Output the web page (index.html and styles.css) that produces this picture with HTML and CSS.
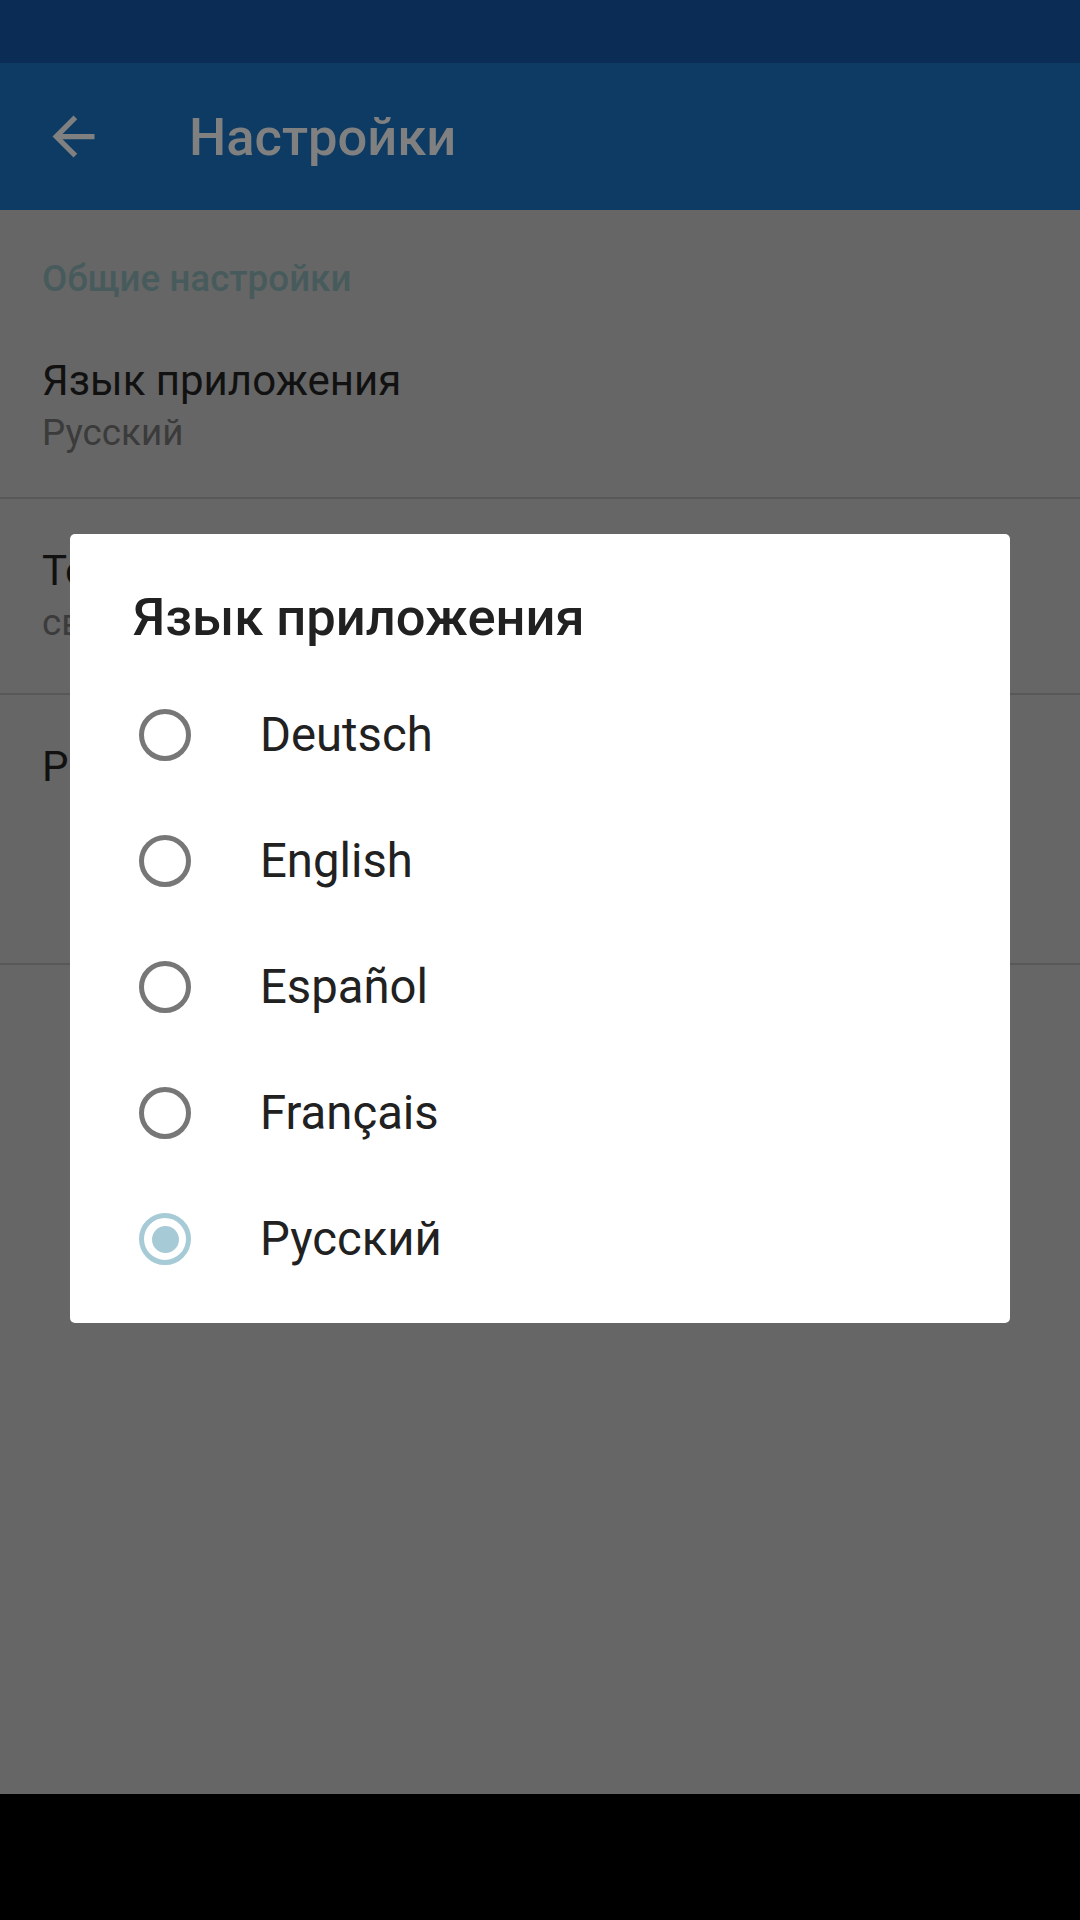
FILE: index.html
```html
<!DOCTYPE html>
<html lang="ru">
<head>
  <meta charset="UTF-8" />
  <title>Настройки</title>
  <link rel="stylesheet" href="styles.css">
</head>
<body>

<div class="status-bar"></div>

<header class="app-bar">
  <svg class="back" viewBox="0 0 24 24" width="63" height="63">
    <path d="M20 11H7.83l5.59-5.59L12 4l-8 8 8 8 1.41-1.41L7.83 13H20v-2z" fill="#808080"/>
  </svg>
  <h1>Настройки</h1>
</header>

<main class="content">
  <div class="category">Общие настройки</div>

  <div class="pref pref-1">
    <div class="pref-title">Язык приложения</div>
    <div class="pref-summary">Русский</div>
  </div>

  <div class="pref pref-2">
    <div class="pref-title">Тема</div>
    <div class="pref-summary">светлая</div>
  </div>

  <div class="pref pref-3">
    <div class="pref-title">Размер шрифта</div>
  </div>
</main>

<div class="nav-bar"></div>

<!-- диалог выбора языка поверх экрана -->
<div class="scrim">
  <div class="dialog">
    <div class="dialog-title">Язык приложения</div>
    <div class="options">
      <div class="option"><span class="radio"></span><span class="label">Deutsch</span></div>
      <div class="option"><span class="radio"></span><span class="label">English</span></div>
      <div class="option"><span class="radio"></span><span class="label">Español</span></div>
      <div class="option"><span class="radio"></span><span class="label">Français</span></div>
      <div class="option checked"><span class="radio"></span><span class="label">Русский</span></div>
    </div>
  </div>
</div>

</body>
</html>
```

FILE: styles.css
```css
body {
  margin: 0;
  width: 1080px;
  height: 1920px;
  display: flex;
  flex-direction: column;
  font-family: Roboto, "Noto Sans", sans-serif;
  background: #666666;
  position: relative;
  overflow: hidden;
}
.status-bar {
  height: 63px;
  background: #0b2c54;
}
.app-bar {
  height: 147px;
  background: #0d3b63;
  display: flex;
  align-items: center;
  padding-left: 42px;
}
.app-bar .back {
  flex: none;
}
.app-bar h1 {
  margin: 0 0 0 84px;
  font-size: 52.5px;
  font-weight: 500;
  color: #808080;
}
.content {
  flex: 1;
  background: #666666;
}
.category {
  height: 99px;
  box-sizing: border-box;
  padding: 47px 42px 0;
  font-size: 36.75px;
  line-height: 44px;
  font-weight: 500;
  color: #475b5c;
}
.pref {
  box-sizing: border-box;
  padding: 47px 42px 0;
  border-bottom: 2px solid #585858;
}
.pref-1 { height: 190px; }
.pref-2 { height: 196px; }
.pref-3 { height: 270px; }
.pref-title {
  font-size: 42px;
  line-height: 50px;
  color: #111111;
}
.pref-summary {
  font-size: 36.75px;
  line-height: 54px;
  color: #3b3b3b;
}
.nav-bar {
  height: 126px;
  background: #000;
}
.scrim {
  position: absolute;
  top: 63px;
  bottom: 126px;
  left: 0;
  right: 0;
  display: flex;
  align-items: center;
  justify-content: center;
}
.dialog {
  width: 940px;
  background: #fff;
  border-radius: 5px;
  padding-bottom: 21px;
}
.dialog-title {
  padding: 53px 63px 0;
  margin-bottom: 24px;
  font-size: 52.5px;
  line-height: 61px;
  font-weight: 500;
  color: #212121;
}
.option {
  height: 126px;
  display: flex;
  align-items: center;
  padding-left: 69px;
}
.radio {
  width: 52px;
  height: 52px;
  box-sizing: border-box;
  border: 5px solid #777777;
  border-radius: 50%;
  display: flex;
  align-items: center;
  justify-content: center;
  flex: none;
}
.option.checked .radio {
  border-color: #a6cbd6;
}
.option.checked .radio::after {
  content: "";
  width: 27px;
  height: 27px;
  border-radius: 50%;
  background: #a6cbd6;
}
.label {
  margin-left: 69px;
  font-size: 47.25px;
  color: #212121;
}
```
